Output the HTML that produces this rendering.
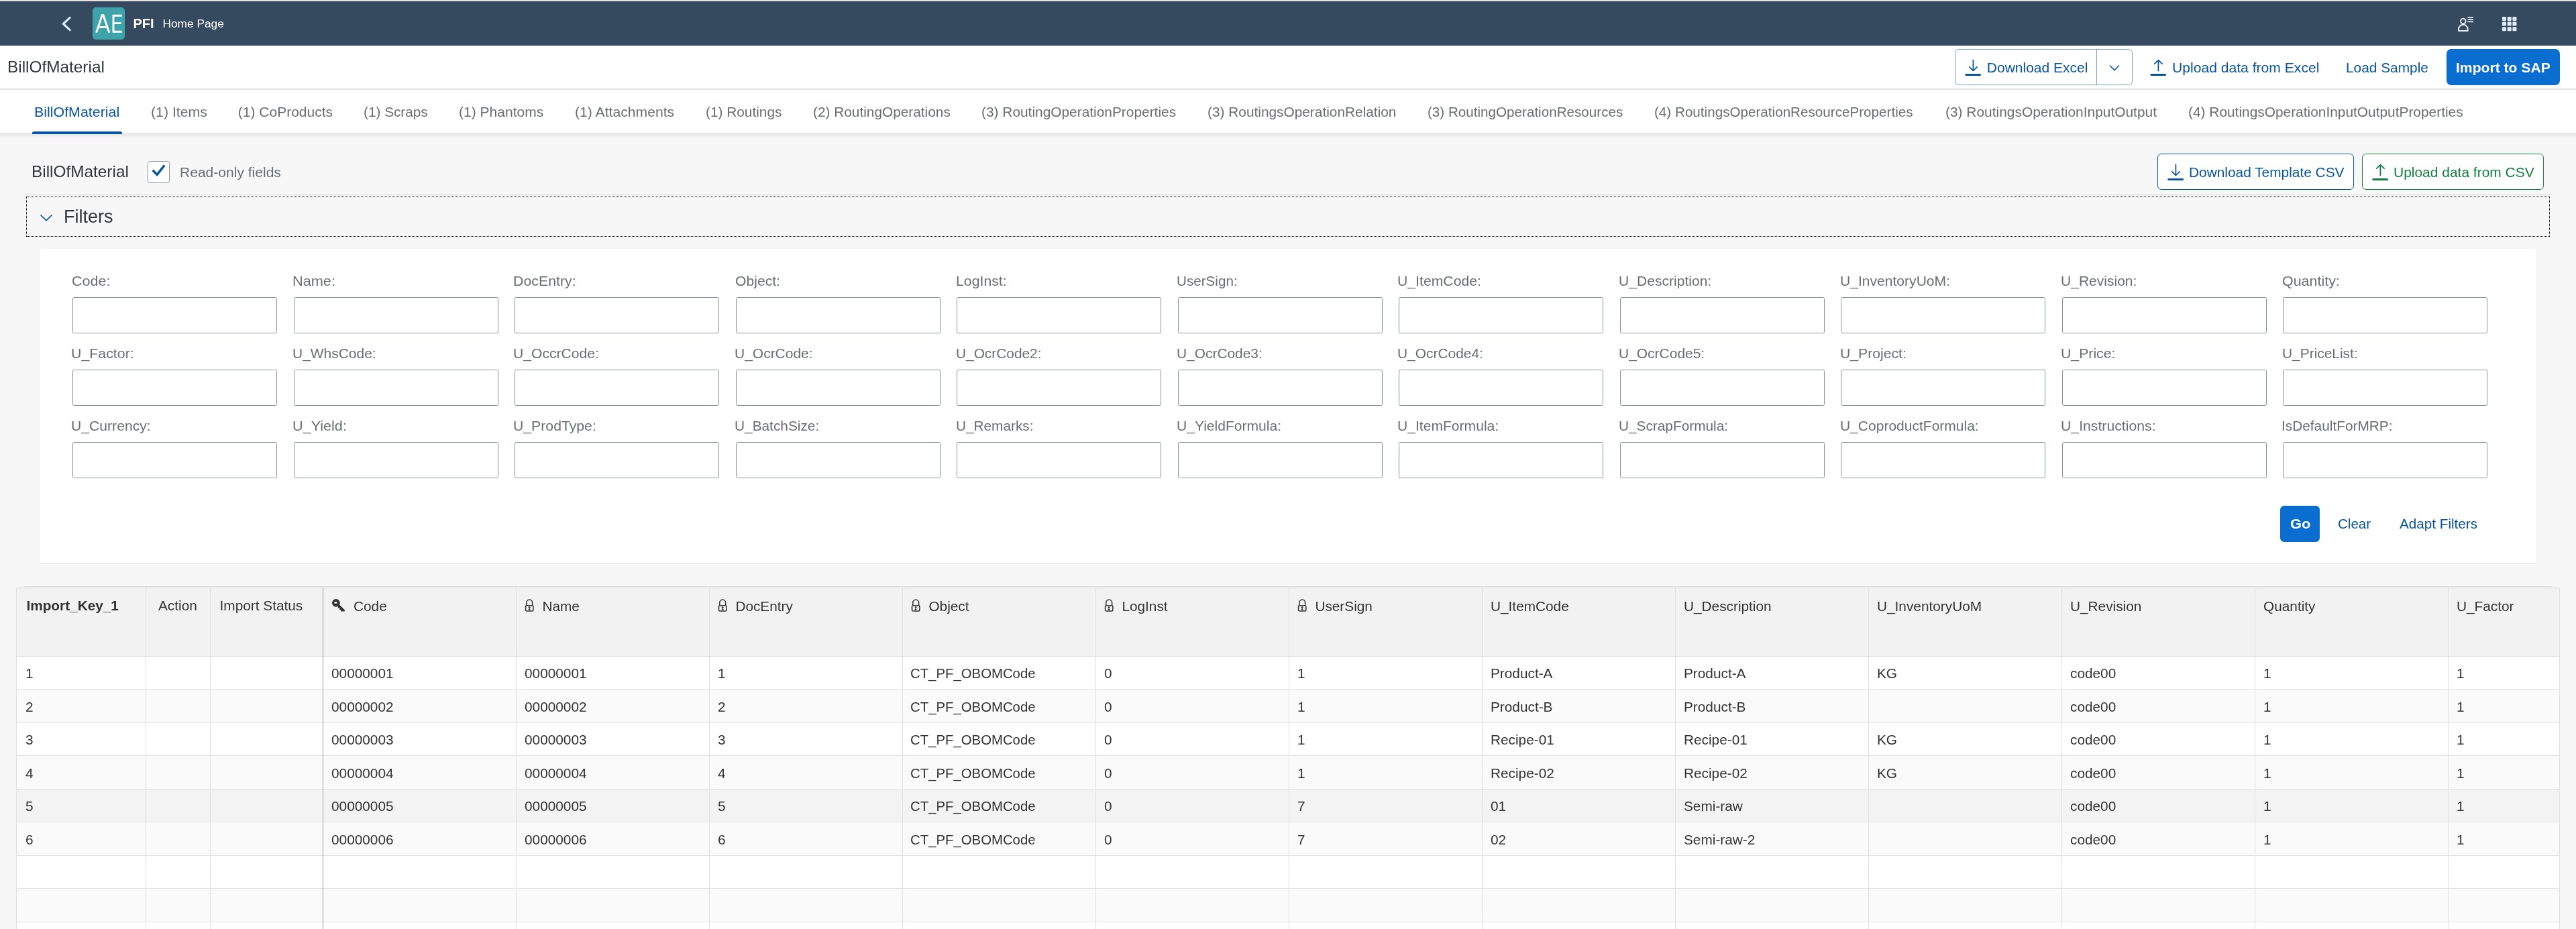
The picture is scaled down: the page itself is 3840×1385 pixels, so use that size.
<!DOCTYPE html>
<html><head><meta charset="utf-8"><title>BillOfMaterial</title>
<style>
html,body{margin:0;padding:0;}
body{width:3840px;height:1385px;overflow:hidden;position:relative;background:#f7f7f7;font-family:"Liberation Sans", sans-serif;}
.t{position:absolute;white-space:nowrap;}
.r{position:absolute;}
</style></head><body>
<div id="wrap" style="position:absolute;left:0;top:0;width:3840px;height:1385px;will-change:transform"><div class="r" style="left:0px;top:0px;width:3840px;height:2px;background:#e3e3e4"></div><div class="r" style="left:0px;top:2px;width:3840px;height:66px;background:#354a5f"></div><div class="r" style="left:0px;top:2px;width:3840px;height:1px;background:#2a3d54"></div><svg class="r" style="left:88px;top:22px" width="24" height="28" viewBox="0 0 24 28"><path d="M16.2 4.3 L6.3 13.5 L16.2 22.6" fill="none" stroke="#d6eaff" stroke-width="3.1" stroke-linecap="round" stroke-linejoin="round"/></svg><div class="r" style="left:138px;top:11px;width:48px;height:48px;background:#3fa3aa;border-radius:5px"></div><svg class="r" style="left:138px;top:11px" width="48" height="48" viewBox="0 0 48 48"><path d="M5.6 37.6 L14.2 11.8 L16 11.8 L24.8 37.6 M8.6 29.4 L21.8 29.4" fill="none" stroke="#fff" stroke-width="2.9" stroke-linejoin="miter"/><path d="M43.6 12.2 L31 12.2 L31 36.2 L43.6 36.2 M31 23.6 L42.8 23.6" fill="none" stroke="#fff" stroke-width="2.9"/></svg><div class="t" style="left:198.50px;top:24.77px;font-size:20px;line-height:20px;color:#ffffff;font-weight:bold;">PFI</div><div class="t" style="left:242.50px;top:26.56px;font-size:17.3px;line-height:17.3px;color:#ffffff;font-weight:normal;">Home Page</div><svg class="r" style="left:3662px;top:22px" width="28" height="28" viewBox="0 0 28 28"><circle cx="9.8" cy="9.6" r="3.8" fill="none" stroke="#e0eeff" stroke-width="2"/><path d="M3 24 L3 21.5 A6.8 6.8 0 0 1 16.6 21.5 L16.6 24 Z" fill="none" stroke="#e0eeff" stroke-width="2" stroke-linejoin="round"/><rect x="16.5" y="3" width="8.5" height="1.8" fill="#e0eeff"/><rect x="16.5" y="6.2" width="8.5" height="1.8" fill="#e0eeff"/><rect x="16.5" y="9.4" width="8.5" height="1.8" fill="#e0eeff"/></svg><svg class="r" style="left:3730px;top:25px" width="23" height="22" viewBox="0 0 23 22"><rect x="0.00" y="0.00" width="6" height="6" rx="1" fill="#e0eeff"/><rect x="7.70" y="0.00" width="6" height="6" rx="1" fill="#e0eeff"/><rect x="15.40" y="0.00" width="6" height="6" rx="1" fill="#e0eeff"/><rect x="0.00" y="7.60" width="6" height="6" rx="1" fill="#e0eeff"/><rect x="7.70" y="7.60" width="6" height="6" rx="1" fill="#e0eeff"/><rect x="15.40" y="7.60" width="6" height="6" rx="1" fill="#e0eeff"/><rect x="0.00" y="15.20" width="6" height="6" rx="1" fill="#e0eeff"/><rect x="7.70" y="15.20" width="6" height="6" rx="1" fill="#e0eeff"/><rect x="15.40" y="15.20" width="6" height="6" rx="1" fill="#e0eeff"/></svg><div class="r" style="left:0px;top:68px;width:3840px;height:65px;background:#ffffff"></div><div class="r" style="left:0px;top:132px;width:3840px;height:2px;background:#e0e0e0"></div><div class="t cal cal0" style="left:11.47px;top:88.48px;font-size:24px;line-height:24px;color:#32363a;font-weight:normal;transform:scaleX(1.0150);transform-origin:0 0;">BillOfMaterial</div><div class="r" style="left:2914px;top:73px;width:265px;height:54px;box-sizing:border-box;border:1px solid #72a0d6;border-radius:6px;background:#fff"></div><div class="r" style="left:3125px;top:73px;width:1px;height:54px;background:#72a0d6"></div><svg class="r" style="left:2929px;top:88px" width="26" height="27" viewBox="0 0 26 27"><path d="M12.4 1.6 V17.3 M6.7 11.9 L12.4 17.5 L18.1 11.9" fill="none" stroke="#0854a0" stroke-width="1.75" stroke-linecap="round" stroke-linejoin="round"/><rect x="0.3" y="22.1" width="23.8" height="2.9" rx="1.45" fill="#0854a0"/></svg><div class="t cal cal1" style="left:2961.80px;top:90.42px;font-size:21px;line-height:21px;color:#0854a0;font-weight:normal;transform:scaleX(1.0000);transform-origin:0 0;">Download Excel</div><svg class="r" style="left:3144px;top:96px" width="16" height="11" viewBox="0 0 16 11"><path d="M1.5 2 L8 8.5 L14.5 2" fill="none" stroke="#0854a0" stroke-width="1.6" stroke-linecap="round"/></svg><svg class="r" style="left:3205px;top:88px" width="26" height="27" viewBox="0 0 26 27"><path d="M12.4 17.6 V2.2 M6.7 7.1 L12.4 1.6 L18.1 7.1" fill="none" stroke="#0854a0" stroke-width="1.75" stroke-linecap="round" stroke-linejoin="round"/><rect x="0.3" y="22.1" width="23.8" height="2.9" rx="1.45" fill="#0854a0"/></svg><div class="t cal cal2" style="left:3238.19px;top:90.42px;font-size:21px;line-height:21px;color:#0854a0;font-weight:normal;transform:scaleX(1.0051);transform-origin:0 0;">Upload data from Excel</div><div class="t cal cal3" style="left:3497.40px;top:90.42px;font-size:21px;line-height:21px;color:#0854a0;font-weight:normal;transform:scaleX(0.9934);transform-origin:0 0;">Load Sample</div><div class="r" style="left:3647px;top:73px;width:169px;height:54px;background:#0a6ed1;border-radius:7px"></div><div class="t cal cal4" style="left:3660.79px;top:90.42px;font-size:21px;line-height:21px;color:#ffffff;font-weight:bold;transform:scaleX(1.0051);transform-origin:0 0;">Import to SAP</div><div class="r" style="left:0px;top:134px;width:3840px;height:65px;background:#ffffff"></div><div class="r" style="left:0px;top:199px;width:3840px;height:1px;background:#d6d6d6"></div><div class="r" style="left:0px;top:200px;width:3840px;height:7px;background:linear-gradient(#e8e8e8,#f7f7f7)"></div><div class="t cal cal5" style="left:51.17px;top:156.12px;font-size:21px;line-height:21px;color:#0854a0;font-weight:normal;transform:scaleX(1.0189);transform-origin:0 0;">BillOfMaterial</div><div class="t cal cal6" style="left:224.78px;top:156.12px;font-size:21px;line-height:21px;color:#6a6d70;font-weight:normal;transform:scaleX(1.0123);transform-origin:0 0;">(1) Items</div><div class="t cal cal7" style="left:354.80px;top:156.12px;font-size:21px;line-height:21px;color:#6a6d70;font-weight:normal;transform:scaleX(1.0000);transform-origin:0 0;">(1) CoProducts</div><div class="t cal cal8" style="left:542.01px;top:156.12px;font-size:21px;line-height:21px;color:#6a6d70;font-weight:normal;transform:scaleX(0.9884);transform-origin:0 0;">(1) Scraps</div><div class="t cal cal9" style="left:684.20px;top:156.12px;font-size:21px;line-height:21px;color:#6a6d70;font-weight:normal;transform:scaleX(1.0024);transform-origin:0 0;">(1) Phantoms</div><div class="t cal cal10" style="left:856.98px;top:156.12px;font-size:21px;line-height:21px;color:#6a6d70;font-weight:normal;transform:scaleX(1.0076);transform-origin:0 0;">(1) Attachments</div><div class="t cal cal11" style="left:1051.81px;top:156.12px;font-size:21px;line-height:21px;color:#6a6d70;font-weight:normal;transform:scaleX(0.9912);transform-origin:0 0;">(1) Routings</div><div class="t cal cal12" style="left:1212.40px;top:156.12px;font-size:21px;line-height:21px;color:#6a6d70;font-weight:normal;transform:scaleX(0.9912);transform-origin:0 0;">(2) RoutingOperations</div><div class="t cal cal13" style="left:1463.21px;top:156.12px;font-size:21px;line-height:21px;color:#6a6d70;font-weight:normal;transform:scaleX(0.9941);transform-origin:0 0;">(3) RoutingOperationProperties</div><div class="t cal cal14" style="left:1800.00px;top:156.12px;font-size:21px;line-height:21px;color:#6a6d70;font-weight:normal;transform:scaleX(0.9922);transform-origin:0 0;">(3) RoutingsOperationRelation</div><div class="t cal cal15" style="left:2127.82px;top:156.12px;font-size:21px;line-height:21px;color:#6a6d70;font-weight:normal;transform:scaleX(0.9824);transform-origin:0 0;">(3) RoutingOperationResources</div><div class="t cal cal16" style="left:2466.02px;top:156.12px;font-size:21px;line-height:21px;color:#6a6d70;font-weight:normal;transform:scaleX(0.9831);transform-origin:0 0;">(4) RoutingsOperationResourceProperties</div><div class="t cal cal17" style="left:2899.59px;top:156.12px;font-size:21px;line-height:21px;color:#6a6d70;font-weight:normal;transform:scaleX(0.9956);transform-origin:0 0;">(3) RoutingsOperationInputOutput</div><div class="t cal cal18" style="left:3261.80px;top:156.12px;font-size:21px;line-height:21px;color:#6a6d70;font-weight:normal;transform:scaleX(0.9941);transform-origin:0 0;">(4) RoutingsOperationInputOutputProperties</div><div class="r" style="left:48px;top:196px;width:134px;height:4px;background:#0854a0;border-radius:2.5px 2.5px 0 0"></div><div class="t cal cal19" style="left:47.37px;top:243.68px;font-size:24px;line-height:24px;color:#32363a;font-weight:normal;transform:scaleX(1.0150);transform-origin:0 0;">BillOfMaterial</div><div class="r" style="left:220px;top:240px;width:33px;height:33px;box-sizing:border-box;border:1.5px solid #89919a;border-radius:3.5px;background:#fff"></div><svg class="r" style="left:224px;top:243px" width="25" height="24" viewBox="0 0 25 24"><path d="M3.6 10.8 L10.2 17.4 L21.2 3.4" fill="none" stroke="#0854a0" stroke-width="3.4" stroke-linecap="butt" stroke-linejoin="miter"/></svg><div class="t cal cal20" style="left:268.39px;top:245.82px;font-size:21px;line-height:21px;color:#6a6d70;font-weight:normal;transform:scaleX(1.0020);transform-origin:0 0;">Read-only fields</div><div class="r" style="left:3216px;top:229px;width:293px;height:54px;box-sizing:border-box;border:1px solid #0b57a4;border-radius:6px;background:#fff"></div><svg class="r" style="left:3231px;top:244px" width="26" height="27" viewBox="0 0 26 27"><path d="M12.4 1.6 V17.3 M6.7 11.9 L12.4 17.5 L18.1 11.9" fill="none" stroke="#0854a0" stroke-width="1.75" stroke-linecap="round" stroke-linejoin="round"/><rect x="0.3" y="22.1" width="23.8" height="2.9" rx="1.45" fill="#0854a0"/></svg><div class="t cal cal21" style="left:3262.81px;top:246.22px;font-size:21px;line-height:21px;color:#0854a0;font-weight:normal;transform:scaleX(0.9931);transform-origin:0 0;">Download Template CSV</div><div class="r" style="left:3521px;top:229px;width:271px;height:54px;box-sizing:border-box;border:1px solid #1a8147;border-radius:6px;background:#fff"></div><svg class="r" style="left:3535.6px;top:244px" width="26" height="27" viewBox="0 0 26 27"><path d="M12.4 17.6 V2.2 M6.7 7.1 L12.4 1.6 L18.1 7.1" fill="none" stroke="#107e3e" stroke-width="1.75" stroke-linecap="round" stroke-linejoin="round"/><rect x="0.3" y="22.1" width="23.8" height="2.9" rx="1.45" fill="#107e3e"/></svg><div class="t cal cal22" style="left:3567.59px;top:246.22px;font-size:21px;line-height:21px;color:#107e3e;font-weight:normal;transform:scaleX(0.9981);transform-origin:0 0;">Upload data from CSV</div><div class="r" style="left:36px;top:289px;width:3768px;height:1px;background:#dcdcdc"></div><div class="r" style="left:39px;top:293px;width:3762px;height:60px;box-sizing:border-box;border:1.5px dotted #000"></div><svg class="r" style="left:58px;top:318px" width="22" height="14" viewBox="0 0 22 14"><path d="M3 2.9 L11 10.9 L19 2.9" fill="none" stroke="#0b59a6" stroke-width="1.65" stroke-linecap="round"/></svg><div class="t cal cal23" style="left:94.58px;top:309.54px;font-size:27px;line-height:27px;color:#32363a;font-weight:normal;transform:scaleX(1.0014);transform-origin:0 0;">Filters</div><div class="r" style="left:60px;top:371px;width:3720px;height:470px;background:#ffffff;border-bottom:1.5px solid #e0e0e0;box-sizing:border-box"></div><div class="t cal cal24" style="left:107.17px;top:408.22px;font-size:21px;line-height:21px;color:#6a6d70;font-weight:normal;transform:scaleX(1.0264);transform-origin:0 0;">Code:</div><div class="r" style="left:108.0px;top:443px;width:305px;height:54px;box-sizing:border-box;border:1px solid #89919a;border-radius:2.5px;background:#fff"></div><div class="t cal cal25" style="left:435.94px;top:408.22px;font-size:21px;line-height:21px;color:#6a6d70;font-weight:normal;transform:scaleX(1.0345);transform-origin:0 0;">Name:</div><div class="r" style="left:437.5px;top:443px;width:305px;height:54px;box-sizing:border-box;border:1px solid #89919a;border-radius:2.5px;background:#fff"></div><div class="t cal cal26" style="left:764.96px;top:408.22px;font-size:21px;line-height:21px;color:#6a6d70;font-weight:normal;transform:scaleX(1.0159);transform-origin:0 0;">DocEntry:</div><div class="r" style="left:767.0px;top:443px;width:305px;height:54px;box-sizing:border-box;border:1px solid #89919a;border-radius:2.5px;background:#fff"></div><div class="t cal cal27" style="left:1096.39px;top:408.22px;font-size:21px;line-height:21px;color:#6a6d70;font-weight:normal;transform:scaleX(1.0063);transform-origin:0 0;">Object:</div><div class="r" style="left:1096.5px;top:443px;width:305px;height:54px;box-sizing:border-box;border:1px solid #89919a;border-radius:2.5px;background:#fff"></div><div class="t cal cal28" style="left:1424.97px;top:408.22px;font-size:21px;line-height:21px;color:#6a6d70;font-weight:normal;transform:scaleX(1.0127);transform-origin:0 0;">LogInst:</div><div class="r" style="left:1426.0px;top:443px;width:305px;height:54px;box-sizing:border-box;border:1px solid #89919a;border-radius:2.5px;background:#fff"></div><div class="t cal cal29" style="left:1754.23px;top:408.22px;font-size:21px;line-height:21px;color:#6a6d70;font-weight:normal;transform:scaleX(0.9831);transform-origin:0 0;">UserSign:</div><div class="r" style="left:1755.5px;top:443px;width:305px;height:54px;box-sizing:border-box;border:1px solid #89919a;border-radius:2.5px;background:#fff"></div><div class="t cal cal30" style="left:2083.37px;top:408.22px;font-size:21px;line-height:21px;color:#6a6d70;font-weight:normal;transform:scaleX(1.0100);transform-origin:0 0;">U_ItemCode:</div><div class="r" style="left:2085.0px;top:443px;width:305px;height:54px;box-sizing:border-box;border:1px solid #89919a;border-radius:2.5px;background:#fff"></div><div class="t cal cal31" style="left:2413.39px;top:408.22px;font-size:21px;line-height:21px;color:#6a6d70;font-weight:normal;transform:scaleX(1.0037);transform-origin:0 0;">U_Description:</div><div class="r" style="left:2414.5px;top:443px;width:305px;height:54px;box-sizing:border-box;border:1px solid #89919a;border-radius:2.5px;background:#fff"></div><div class="t cal cal32" style="left:2742.98px;top:408.22px;font-size:21px;line-height:21px;color:#6a6d70;font-weight:normal;transform:scaleX(1.0037);transform-origin:0 0;">U_InventoryUoM:</div><div class="r" style="left:2744.0px;top:443px;width:305px;height:54px;box-sizing:border-box;border:1px solid #89919a;border-radius:2.5px;background:#fff"></div><div class="t cal cal33" style="left:3071.58px;top:408.22px;font-size:21px;line-height:21px;color:#6a6d70;font-weight:normal;transform:scaleX(1.0018);transform-origin:0 0;">U_Revision:</div><div class="r" style="left:3073.5px;top:443px;width:305px;height:54px;box-sizing:border-box;border:1px solid #89919a;border-radius:2.5px;background:#fff"></div><div class="t cal cal34" style="left:3401.56px;top:408.22px;font-size:21px;line-height:21px;color:#6a6d70;font-weight:normal;transform:scaleX(1.0210);transform-origin:0 0;">Quantity:</div><div class="r" style="left:3403.0px;top:443px;width:305px;height:54px;box-sizing:border-box;border:1px solid #89919a;border-radius:2.5px;background:#fff"></div><div class="t cal cal35" style="left:106.17px;top:516.22px;font-size:21px;line-height:21px;color:#6a6d70;font-weight:normal;transform:scaleX(1.0159);transform-origin:0 0;">U_Factor:</div><div class="r" style="left:108.0px;top:551px;width:305px;height:54px;box-sizing:border-box;border:1px solid #89919a;border-radius:2.5px;background:#fff"></div><div class="t cal cal36" style="left:435.99px;top:516.22px;font-size:21px;line-height:21px;color:#6a6d70;font-weight:normal;transform:scaleX(0.9983);transform-origin:0 0;">U_WhsCode:</div><div class="r" style="left:437.5px;top:551px;width:305px;height:54px;box-sizing:border-box;border:1px solid #89919a;border-radius:2.5px;background:#fff"></div><div class="t cal cal37" style="left:764.98px;top:516.22px;font-size:21px;line-height:21px;color:#6a6d70;font-weight:normal;transform:scaleX(1.0057);transform-origin:0 0;">U_OccrCode:</div><div class="r" style="left:767.0px;top:551px;width:305px;height:54px;box-sizing:border-box;border:1px solid #89919a;border-radius:2.5px;background:#fff"></div><div class="t cal cal38" style="left:1095.39px;top:516.22px;font-size:21px;line-height:21px;color:#6a6d70;font-weight:normal;transform:scaleX(0.9991);transform-origin:0 0;">U_OcrCode:</div><div class="r" style="left:1096.5px;top:551px;width:305px;height:54px;box-sizing:border-box;border:1px solid #89919a;border-radius:2.5px;background:#fff"></div><div class="t cal cal39" style="left:1425.00px;top:516.22px;font-size:21px;line-height:21px;color:#6a6d70;font-weight:normal;transform:scaleX(0.9928);transform-origin:0 0;">U_OcrCode2:</div><div class="r" style="left:1426.0px;top:551px;width:305px;height:54px;box-sizing:border-box;border:1px solid #89919a;border-radius:2.5px;background:#fff"></div><div class="t cal cal40" style="left:1754.21px;top:516.22px;font-size:21px;line-height:21px;color:#6a6d70;font-weight:normal;transform:scaleX(0.9952);transform-origin:0 0;">U_OcrCode3:</div><div class="r" style="left:1755.5px;top:551px;width:305px;height:54px;box-sizing:border-box;border:1px solid #89919a;border-radius:2.5px;background:#fff"></div><div class="t cal cal41" style="left:2083.40px;top:516.22px;font-size:21px;line-height:21px;color:#6a6d70;font-weight:normal;transform:scaleX(0.9960);transform-origin:0 0;">U_OcrCode4:</div><div class="r" style="left:2085.0px;top:551px;width:305px;height:54px;box-sizing:border-box;border:1px solid #89919a;border-radius:2.5px;background:#fff"></div><div class="t cal cal42" style="left:2413.40px;top:516.22px;font-size:21px;line-height:21px;color:#6a6d70;font-weight:normal;transform:scaleX(0.9984);transform-origin:0 0;">U_OcrCode5:</div><div class="r" style="left:2414.5px;top:551px;width:305px;height:54px;box-sizing:border-box;border:1px solid #89919a;border-radius:2.5px;background:#fff"></div><div class="t cal cal43" style="left:2742.98px;top:516.22px;font-size:21px;line-height:21px;color:#6a6d70;font-weight:normal;transform:scaleX(1.0074);transform-origin:0 0;">U_Project:</div><div class="r" style="left:2744.0px;top:551px;width:305px;height:54px;box-sizing:border-box;border:1px solid #89919a;border-radius:2.5px;background:#fff"></div><div class="t cal cal44" style="left:3071.57px;top:516.22px;font-size:21px;line-height:21px;color:#6a6d70;font-weight:normal;transform:scaleX(1.0117);transform-origin:0 0;">U_Price:</div><div class="r" style="left:3073.5px;top:551px;width:305px;height:54px;box-sizing:border-box;border:1px solid #89919a;border-radius:2.5px;background:#fff"></div><div class="t cal cal45" style="left:3401.59px;top:516.22px;font-size:21px;line-height:21px;color:#6a6d70;font-weight:normal;transform:scaleX(0.9955);transform-origin:0 0;">U_PriceList:</div><div class="r" style="left:3403.0px;top:551px;width:305px;height:54px;box-sizing:border-box;border:1px solid #89919a;border-radius:2.5px;background:#fff"></div><div class="t cal cal46" style="left:106.19px;top:624.22px;font-size:21px;line-height:21px;color:#6a6d70;font-weight:normal;transform:scaleX(1.0070);transform-origin:0 0;">U_Currency:</div><div class="r" style="left:108.0px;top:659px;width:305px;height:54px;box-sizing:border-box;border:1px solid #89919a;border-radius:2.5px;background:#fff"></div><div class="t cal cal47" style="left:435.94px;top:624.22px;font-size:21px;line-height:21px;color:#6a6d70;font-weight:normal;transform:scaleX(1.0293);transform-origin:0 0;">U_Yield:</div><div class="r" style="left:437.5px;top:659px;width:305px;height:54px;box-sizing:border-box;border:1px solid #89919a;border-radius:2.5px;background:#fff"></div><div class="t cal cal48" style="left:764.97px;top:624.22px;font-size:21px;line-height:21px;color:#6a6d70;font-weight:normal;transform:scaleX(1.0102);transform-origin:0 0;">U_ProdType:</div><div class="r" style="left:767.0px;top:659px;width:305px;height:54px;box-sizing:border-box;border:1px solid #89919a;border-radius:2.5px;background:#fff"></div><div class="t cal cal49" style="left:1095.41px;top:624.22px;font-size:21px;line-height:21px;color:#6a6d70;font-weight:normal;transform:scaleX(0.9919);transform-origin:0 0;">U_BatchSize:</div><div class="r" style="left:1096.5px;top:659px;width:305px;height:54px;box-sizing:border-box;border:1px solid #89919a;border-radius:2.5px;background:#fff"></div><div class="t cal cal50" style="left:1425.01px;top:624.22px;font-size:21px;line-height:21px;color:#6a6d70;font-weight:normal;transform:scaleX(0.9894);transform-origin:0 0;">U_Remarks:</div><div class="r" style="left:1426.0px;top:659px;width:305px;height:54px;box-sizing:border-box;border:1px solid #89919a;border-radius:2.5px;background:#fff"></div><div class="t cal cal51" style="left:1754.20px;top:624.22px;font-size:21px;line-height:21px;color:#6a6d70;font-weight:normal;transform:scaleX(1.0026);transform-origin:0 0;">U_YieldFormula:</div><div class="r" style="left:1755.5px;top:659px;width:305px;height:54px;box-sizing:border-box;border:1px solid #89919a;border-radius:2.5px;background:#fff"></div><div class="t cal cal52" style="left:2083.39px;top:624.22px;font-size:21px;line-height:21px;color:#6a6d70;font-weight:normal;transform:scaleX(1.0041);transform-origin:0 0;">U_ItemFormula:</div><div class="r" style="left:2085.0px;top:659px;width:305px;height:54px;box-sizing:border-box;border:1px solid #89919a;border-radius:2.5px;background:#fff"></div><div class="t cal cal53" style="left:2413.41px;top:624.22px;font-size:21px;line-height:21px;color:#6a6d70;font-weight:normal;transform:scaleX(0.9907);transform-origin:0 0;">U_ScrapFormula:</div><div class="r" style="left:2414.5px;top:659px;width:305px;height:54px;box-sizing:border-box;border:1px solid #89919a;border-radius:2.5px;background:#fff"></div><div class="t cal cal54" style="left:2742.99px;top:624.22px;font-size:21px;line-height:21px;color:#6a6d70;font-weight:normal;transform:scaleX(1.0005);transform-origin:0 0;">U_CoproductFormula:</div><div class="r" style="left:2744.0px;top:659px;width:305px;height:54px;box-sizing:border-box;border:1px solid #89919a;border-radius:2.5px;background:#fff"></div><div class="t cal cal55" style="left:3071.57px;top:624.22px;font-size:21px;line-height:21px;color:#6a6d70;font-weight:normal;transform:scaleX(1.0110);transform-origin:0 0;">U_Instructions:</div><div class="r" style="left:3073.5px;top:659px;width:305px;height:54px;box-sizing:border-box;border:1px solid #89919a;border-radius:2.5px;background:#fff"></div><div class="t cal cal56" style="left:3400.61px;top:624.22px;font-size:21px;line-height:21px;color:#6a6d70;font-weight:normal;transform:scaleX(0.9920);transform-origin:0 0;">IsDefaultForMRP:</div><div class="r" style="left:3403.0px;top:659px;width:305px;height:54px;box-sizing:border-box;border:1px solid #89919a;border-radius:2.5px;background:#fff"></div><div class="r" style="left:3399px;top:754px;width:59px;height:54px;background:#0a6ed1;border-radius:6px"></div><div class="t cal cal57" style="left:3413.53px;top:770.22px;font-size:21px;line-height:21px;color:#ffffff;font-weight:bold;transform:scaleX(1.0407);transform-origin:0 0;">Go</div><div class="t cal cal58" style="left:3484.82px;top:770.22px;font-size:21px;line-height:21px;color:#0854a0;font-weight:normal;transform:scaleX(0.9796);transform-origin:0 0;">Clear</div><div class="t cal cal59" style="left:3577.39px;top:770.22px;font-size:21px;line-height:21px;color:#0854a0;font-weight:normal;transform:scaleX(0.9846);transform-origin:0 0;">Adapt Filters</div><div class="r" style="left:36px;top:874px;width:3768px;height:1px;background:#dcdcdc"></div><div class="r" style="left:25px;top:876px;width:3791px;height:509px;background:#ffffff"></div><div class="r" style="left:25px;top:876px;width:3791px;height:102px;background:#f2f2f2"></div><div class="r" style="left:25px;top:875.5px;width:3791px;height:1.5px;background:#d5d5d5"></div><div class="r" style="left:25px;top:978.30px;width:3791px;height:49.5px;background:#ffffff"></div><div class="r" style="left:25px;top:977.80px;width:3791px;height:1px;background:#e1e1e1"></div><div class="r" style="left:25px;top:1027.80px;width:3791px;height:49.5px;background:#fafafa"></div><div class="r" style="left:25px;top:1027.30px;width:3791px;height:1px;background:#e1e1e1"></div><div class="r" style="left:25px;top:1077.30px;width:3791px;height:49.5px;background:#ffffff"></div><div class="r" style="left:25px;top:1076.80px;width:3791px;height:1px;background:#e1e1e1"></div><div class="r" style="left:25px;top:1126.80px;width:3791px;height:49.5px;background:#fafafa"></div><div class="r" style="left:25px;top:1126.30px;width:3791px;height:1px;background:#e1e1e1"></div><div class="r" style="left:25px;top:1176.30px;width:3791px;height:49.5px;background:#f3f3f3"></div><div class="r" style="left:25px;top:1175.80px;width:3791px;height:1px;background:#e1e1e1"></div><div class="r" style="left:25px;top:1225.80px;width:3791px;height:49.5px;background:#fafafa"></div><div class="r" style="left:25px;top:1225.30px;width:3791px;height:1px;background:#e1e1e1"></div><div class="r" style="left:25px;top:1275.30px;width:3791px;height:49.5px;background:#ffffff"></div><div class="r" style="left:25px;top:1274.80px;width:3791px;height:1px;background:#e1e1e1"></div><div class="r" style="left:25px;top:1324.80px;width:3791px;height:49.5px;background:#fafafa"></div><div class="r" style="left:25px;top:1324.30px;width:3791px;height:1px;background:#e1e1e1"></div><div class="r" style="left:25px;top:1374.30px;width:3791px;height:49.5px;background:#ffffff"></div><div class="r" style="left:25px;top:1373.80px;width:3791px;height:1px;background:#e1e1e1"></div><div class="r" style="left:25px;top:977.80px;width:3791px;height:1.5px;background:#dcdcdc"></div><div class="r" style="left:24.20px;top:876px;width:1.2px;height:509px;background:#e1e1e1"></div><div class="r" style="left:216.90px;top:876px;width:1.2px;height:509px;background:#e1e1e1"></div><div class="r" style="left:312.90px;top:876px;width:1.2px;height:509px;background:#e1e1e1"></div><div class="r" style="left:480.90px;top:876px;width:1.2px;height:509px;background:#9a9a9a"></div><div class="r" style="left:768.90px;top:876px;width:1.2px;height:509px;background:#e1e1e1"></div><div class="r" style="left:1056.90px;top:876px;width:1.2px;height:509px;background:#e1e1e1"></div><div class="r" style="left:1344.90px;top:876px;width:1.2px;height:509px;background:#e1e1e1"></div><div class="r" style="left:1632.90px;top:876px;width:1.2px;height:509px;background:#e1e1e1"></div><div class="r" style="left:1920.90px;top:876px;width:1.2px;height:509px;background:#e1e1e1"></div><div class="r" style="left:2208.90px;top:876px;width:1.2px;height:509px;background:#e1e1e1"></div><div class="r" style="left:2496.90px;top:876px;width:1.2px;height:509px;background:#e1e1e1"></div><div class="r" style="left:2784.90px;top:876px;width:1.2px;height:509px;background:#e1e1e1"></div><div class="r" style="left:3072.90px;top:876px;width:1.2px;height:509px;background:#e1e1e1"></div><div class="r" style="left:3360.90px;top:876px;width:1.2px;height:509px;background:#e1e1e1"></div><div class="r" style="left:3648.90px;top:876px;width:1.2px;height:509px;background:#e1e1e1"></div><div class="r" style="left:3815px;top:876px;width:1px;height:509px;background:#e1e1e1"></div><div class="t" style="left:39.40px;top:893.09px;font-size:20.8px;line-height:20.8px;color:#333333;font-weight:bold;">Import_Key_1</div><div class="t" style="left:236.00px;top:893.09px;font-size:20.8px;line-height:20.8px;color:#333333;font-weight:normal;">Action</div><div class="t" style="left:327.60px;top:893.09px;font-size:20.8px;line-height:20.8px;color:#333333;font-weight:normal;">Import Status</div><svg class="r" style="left:488px;top:886px" width="32" height="32" viewBox="0 0 32 32"><circle cx="12.9" cy="12.9" r="5.9" fill="#333"/><path d="M17.6 15.2 L25.7 23.3 Q26.6 25.6 24.3 25.6 L20.4 25.6 L20.4 23.5 L18.3 23.5 L18.3 20.5 L15.8 20.5 L15.8 18 L12 15 Z" fill="#333"/><ellipse cx="12.4" cy="12.6" rx="2.1" ry="1.5" fill="#f2f2f2"/></svg><div class="t" style="left:527.00px;top:893.89px;font-size:20.8px;line-height:20.8px;color:#333333;font-weight:normal;">Code</div><svg class="r" style="left:782.4px;top:893px" width="15" height="20" viewBox="0 0 15 20"><path d="M2.8 9.4 V5.3 A4.4 4.4 0 0 1 11.6 5.3 V9.4" fill="none" stroke="#333" stroke-width="1.55"/><rect x="1.55" y="9.75" width="11.3" height="8.2" rx="1.5" fill="none" stroke="#333" stroke-width="1.55"/><circle cx="7.1" cy="12.6" r="1.4" fill="#333"/><path d="M5.1 16.6 L9.1 16.6 L7.1 13.4 Z" fill="#333"/></svg><div class="t" style="left:808.40px;top:893.89px;font-size:20.8px;line-height:20.8px;color:#333333;font-weight:normal;">Name</div><svg class="r" style="left:1070.4px;top:893px" width="15" height="20" viewBox="0 0 15 20"><path d="M2.8 9.4 V5.3 A4.4 4.4 0 0 1 11.6 5.3 V9.4" fill="none" stroke="#333" stroke-width="1.55"/><rect x="1.55" y="9.75" width="11.3" height="8.2" rx="1.5" fill="none" stroke="#333" stroke-width="1.55"/><circle cx="7.1" cy="12.6" r="1.4" fill="#333"/><path d="M5.1 16.6 L9.1 16.6 L7.1 13.4 Z" fill="#333"/></svg><div class="t" style="left:1096.40px;top:893.89px;font-size:20.8px;line-height:20.8px;color:#333333;font-weight:normal;">DocEntry</div><svg class="r" style="left:1358.4px;top:893px" width="15" height="20" viewBox="0 0 15 20"><path d="M2.8 9.4 V5.3 A4.4 4.4 0 0 1 11.6 5.3 V9.4" fill="none" stroke="#333" stroke-width="1.55"/><rect x="1.55" y="9.75" width="11.3" height="8.2" rx="1.5" fill="none" stroke="#333" stroke-width="1.55"/><circle cx="7.1" cy="12.6" r="1.4" fill="#333"/><path d="M5.1 16.6 L9.1 16.6 L7.1 13.4 Z" fill="#333"/></svg><div class="t" style="left:1384.40px;top:893.89px;font-size:20.8px;line-height:20.8px;color:#333333;font-weight:normal;">Object</div><svg class="r" style="left:1646.4px;top:893px" width="15" height="20" viewBox="0 0 15 20"><path d="M2.8 9.4 V5.3 A4.4 4.4 0 0 1 11.6 5.3 V9.4" fill="none" stroke="#333" stroke-width="1.55"/><rect x="1.55" y="9.75" width="11.3" height="8.2" rx="1.5" fill="none" stroke="#333" stroke-width="1.55"/><circle cx="7.1" cy="12.6" r="1.4" fill="#333"/><path d="M5.1 16.6 L9.1 16.6 L7.1 13.4 Z" fill="#333"/></svg><div class="t" style="left:1672.40px;top:893.89px;font-size:20.8px;line-height:20.8px;color:#333333;font-weight:normal;">LogInst</div><svg class="r" style="left:1934.4px;top:893px" width="15" height="20" viewBox="0 0 15 20"><path d="M2.8 9.4 V5.3 A4.4 4.4 0 0 1 11.6 5.3 V9.4" fill="none" stroke="#333" stroke-width="1.55"/><rect x="1.55" y="9.75" width="11.3" height="8.2" rx="1.5" fill="none" stroke="#333" stroke-width="1.55"/><circle cx="7.1" cy="12.6" r="1.4" fill="#333"/><path d="M5.1 16.6 L9.1 16.6 L7.1 13.4 Z" fill="#333"/></svg><div class="t" style="left:1960.40px;top:893.89px;font-size:20.8px;line-height:20.8px;color:#333333;font-weight:normal;">UserSign</div><div class="t" style="left:2222.00px;top:893.89px;font-size:20.8px;line-height:20.8px;color:#333333;font-weight:normal;">U_ItemCode</div><div class="t" style="left:2510.00px;top:893.89px;font-size:20.8px;line-height:20.8px;color:#333333;font-weight:normal;">U_Description</div><div class="t" style="left:2798.00px;top:893.89px;font-size:20.8px;line-height:20.8px;color:#333333;font-weight:normal;">U_InventoryUoM</div><div class="t" style="left:3086.00px;top:893.89px;font-size:20.8px;line-height:20.8px;color:#333333;font-weight:normal;">U_Revision</div><div class="t" style="left:3374.00px;top:893.89px;font-size:20.8px;line-height:20.8px;color:#333333;font-weight:normal;">Quantity</div><div class="t" style="left:3662.00px;top:893.89px;font-size:20.8px;line-height:20.8px;color:#333333;font-weight:normal;">U_Factor</div><div class="t" style="left:37.90px;top:994.09px;font-size:20.8px;line-height:20.8px;color:#333333;font-weight:normal;">1</div><div class="t" style="left:494.00px;top:994.09px;font-size:20.8px;line-height:20.8px;color:#333333;font-weight:normal;">00000001</div><div class="t" style="left:782.00px;top:994.09px;font-size:20.8px;line-height:20.8px;color:#333333;font-weight:normal;">00000001</div><div class="t" style="left:1070.00px;top:994.09px;font-size:20.8px;line-height:20.8px;color:#333333;font-weight:normal;">1</div><div class="t cal cal60" style="left:1356.81px;top:994.09px;font-size:20.8px;line-height:20.8px;color:#333333;font-weight:normal;transform:scaleX(0.9783);transform-origin:0 0;">CT_PF_OBOMCode</div><div class="t" style="left:1646.00px;top:994.09px;font-size:20.8px;line-height:20.8px;color:#333333;font-weight:normal;">0</div><div class="t" style="left:1934.00px;top:994.09px;font-size:20.8px;line-height:20.8px;color:#333333;font-weight:normal;">1</div><div class="t" style="left:2222.00px;top:994.09px;font-size:20.8px;line-height:20.8px;color:#333333;font-weight:normal;">Product-A</div><div class="t" style="left:2510.00px;top:994.09px;font-size:20.8px;line-height:20.8px;color:#333333;font-weight:normal;">Product-A</div><div class="t" style="left:2798.00px;top:994.09px;font-size:20.8px;line-height:20.8px;color:#333333;font-weight:normal;">KG</div><div class="t" style="left:3086.00px;top:994.09px;font-size:20.8px;line-height:20.8px;color:#333333;font-weight:normal;">code00</div><div class="t" style="left:3374.00px;top:994.09px;font-size:20.8px;line-height:20.8px;color:#333333;font-weight:normal;">1</div><div class="t" style="left:3662.00px;top:994.09px;font-size:20.8px;line-height:20.8px;color:#333333;font-weight:normal;">1</div><div class="t" style="left:37.90px;top:1043.59px;font-size:20.8px;line-height:20.8px;color:#333333;font-weight:normal;">2</div><div class="t" style="left:494.00px;top:1043.59px;font-size:20.8px;line-height:20.8px;color:#333333;font-weight:normal;">00000002</div><div class="t" style="left:782.00px;top:1043.59px;font-size:20.8px;line-height:20.8px;color:#333333;font-weight:normal;">00000002</div><div class="t" style="left:1070.00px;top:1043.59px;font-size:20.8px;line-height:20.8px;color:#333333;font-weight:normal;">2</div><div class="t cal cal61" style="left:1356.81px;top:1043.59px;font-size:20.8px;line-height:20.8px;color:#333333;font-weight:normal;transform:scaleX(0.9783);transform-origin:0 0;">CT_PF_OBOMCode</div><div class="t" style="left:1646.00px;top:1043.59px;font-size:20.8px;line-height:20.8px;color:#333333;font-weight:normal;">0</div><div class="t" style="left:1934.00px;top:1043.59px;font-size:20.8px;line-height:20.8px;color:#333333;font-weight:normal;">1</div><div class="t" style="left:2222.00px;top:1043.59px;font-size:20.8px;line-height:20.8px;color:#333333;font-weight:normal;">Product-B</div><div class="t" style="left:2510.00px;top:1043.59px;font-size:20.8px;line-height:20.8px;color:#333333;font-weight:normal;">Product-B</div><div class="t" style="left:3086.00px;top:1043.59px;font-size:20.8px;line-height:20.8px;color:#333333;font-weight:normal;">code00</div><div class="t" style="left:3374.00px;top:1043.59px;font-size:20.8px;line-height:20.8px;color:#333333;font-weight:normal;">1</div><div class="t" style="left:3662.00px;top:1043.59px;font-size:20.8px;line-height:20.8px;color:#333333;font-weight:normal;">1</div><div class="t" style="left:37.90px;top:1093.09px;font-size:20.8px;line-height:20.8px;color:#333333;font-weight:normal;">3</div><div class="t" style="left:494.00px;top:1093.09px;font-size:20.8px;line-height:20.8px;color:#333333;font-weight:normal;">00000003</div><div class="t" style="left:782.00px;top:1093.09px;font-size:20.8px;line-height:20.8px;color:#333333;font-weight:normal;">00000003</div><div class="t" style="left:1070.00px;top:1093.09px;font-size:20.8px;line-height:20.8px;color:#333333;font-weight:normal;">3</div><div class="t cal cal62" style="left:1356.81px;top:1093.09px;font-size:20.8px;line-height:20.8px;color:#333333;font-weight:normal;transform:scaleX(0.9783);transform-origin:0 0;">CT_PF_OBOMCode</div><div class="t" style="left:1646.00px;top:1093.09px;font-size:20.8px;line-height:20.8px;color:#333333;font-weight:normal;">0</div><div class="t" style="left:1934.00px;top:1093.09px;font-size:20.8px;line-height:20.8px;color:#333333;font-weight:normal;">1</div><div class="t" style="left:2222.00px;top:1093.09px;font-size:20.8px;line-height:20.8px;color:#333333;font-weight:normal;">Recipe-01</div><div class="t" style="left:2510.00px;top:1093.09px;font-size:20.8px;line-height:20.8px;color:#333333;font-weight:normal;">Recipe-01</div><div class="t" style="left:2798.00px;top:1093.09px;font-size:20.8px;line-height:20.8px;color:#333333;font-weight:normal;">KG</div><div class="t" style="left:3086.00px;top:1093.09px;font-size:20.8px;line-height:20.8px;color:#333333;font-weight:normal;">code00</div><div class="t" style="left:3374.00px;top:1093.09px;font-size:20.8px;line-height:20.8px;color:#333333;font-weight:normal;">1</div><div class="t" style="left:3662.00px;top:1093.09px;font-size:20.8px;line-height:20.8px;color:#333333;font-weight:normal;">1</div><div class="t" style="left:37.90px;top:1142.59px;font-size:20.8px;line-height:20.8px;color:#333333;font-weight:normal;">4</div><div class="t" style="left:494.00px;top:1142.59px;font-size:20.8px;line-height:20.8px;color:#333333;font-weight:normal;">00000004</div><div class="t" style="left:782.00px;top:1142.59px;font-size:20.8px;line-height:20.8px;color:#333333;font-weight:normal;">00000004</div><div class="t" style="left:1070.00px;top:1142.59px;font-size:20.8px;line-height:20.8px;color:#333333;font-weight:normal;">4</div><div class="t cal cal63" style="left:1356.81px;top:1142.59px;font-size:20.8px;line-height:20.8px;color:#333333;font-weight:normal;transform:scaleX(0.9783);transform-origin:0 0;">CT_PF_OBOMCode</div><div class="t" style="left:1646.00px;top:1142.59px;font-size:20.8px;line-height:20.8px;color:#333333;font-weight:normal;">0</div><div class="t" style="left:1934.00px;top:1142.59px;font-size:20.8px;line-height:20.8px;color:#333333;font-weight:normal;">1</div><div class="t" style="left:2222.00px;top:1142.59px;font-size:20.8px;line-height:20.8px;color:#333333;font-weight:normal;">Recipe-02</div><div class="t" style="left:2510.00px;top:1142.59px;font-size:20.8px;line-height:20.8px;color:#333333;font-weight:normal;">Recipe-02</div><div class="t" style="left:2798.00px;top:1142.59px;font-size:20.8px;line-height:20.8px;color:#333333;font-weight:normal;">KG</div><div class="t" style="left:3086.00px;top:1142.59px;font-size:20.8px;line-height:20.8px;color:#333333;font-weight:normal;">code00</div><div class="t" style="left:3374.00px;top:1142.59px;font-size:20.8px;line-height:20.8px;color:#333333;font-weight:normal;">1</div><div class="t" style="left:3662.00px;top:1142.59px;font-size:20.8px;line-height:20.8px;color:#333333;font-weight:normal;">1</div><div class="t" style="left:37.90px;top:1192.09px;font-size:20.8px;line-height:20.8px;color:#333333;font-weight:normal;">5</div><div class="t" style="left:494.00px;top:1192.09px;font-size:20.8px;line-height:20.8px;color:#333333;font-weight:normal;">00000005</div><div class="t" style="left:782.00px;top:1192.09px;font-size:20.8px;line-height:20.8px;color:#333333;font-weight:normal;">00000005</div><div class="t" style="left:1070.00px;top:1192.09px;font-size:20.8px;line-height:20.8px;color:#333333;font-weight:normal;">5</div><div class="t cal cal64" style="left:1356.81px;top:1192.09px;font-size:20.8px;line-height:20.8px;color:#333333;font-weight:normal;transform:scaleX(0.9783);transform-origin:0 0;">CT_PF_OBOMCode</div><div class="t" style="left:1646.00px;top:1192.09px;font-size:20.8px;line-height:20.8px;color:#333333;font-weight:normal;">0</div><div class="t" style="left:1934.00px;top:1192.09px;font-size:20.8px;line-height:20.8px;color:#333333;font-weight:normal;">7</div><div class="t" style="left:2222.00px;top:1192.09px;font-size:20.8px;line-height:20.8px;color:#333333;font-weight:normal;">01</div><div class="t" style="left:2510.00px;top:1192.09px;font-size:20.8px;line-height:20.8px;color:#333333;font-weight:normal;">Semi-raw</div><div class="t" style="left:3086.00px;top:1192.09px;font-size:20.8px;line-height:20.8px;color:#333333;font-weight:normal;">code00</div><div class="t" style="left:3374.00px;top:1192.09px;font-size:20.8px;line-height:20.8px;color:#333333;font-weight:normal;">1</div><div class="t" style="left:3662.00px;top:1192.09px;font-size:20.8px;line-height:20.8px;color:#333333;font-weight:normal;">1</div><div class="t" style="left:37.90px;top:1241.59px;font-size:20.8px;line-height:20.8px;color:#333333;font-weight:normal;">6</div><div class="t" style="left:494.00px;top:1241.59px;font-size:20.8px;line-height:20.8px;color:#333333;font-weight:normal;">00000006</div><div class="t" style="left:782.00px;top:1241.59px;font-size:20.8px;line-height:20.8px;color:#333333;font-weight:normal;">00000006</div><div class="t" style="left:1070.00px;top:1241.59px;font-size:20.8px;line-height:20.8px;color:#333333;font-weight:normal;">6</div><div class="t cal cal65" style="left:1356.81px;top:1241.59px;font-size:20.8px;line-height:20.8px;color:#333333;font-weight:normal;transform:scaleX(0.9783);transform-origin:0 0;">CT_PF_OBOMCode</div><div class="t" style="left:1646.00px;top:1241.59px;font-size:20.8px;line-height:20.8px;color:#333333;font-weight:normal;">0</div><div class="t" style="left:1934.00px;top:1241.59px;font-size:20.8px;line-height:20.8px;color:#333333;font-weight:normal;">7</div><div class="t" style="left:2222.00px;top:1241.59px;font-size:20.8px;line-height:20.8px;color:#333333;font-weight:normal;">02</div><div class="t" style="left:2510.00px;top:1241.59px;font-size:20.8px;line-height:20.8px;color:#333333;font-weight:normal;">Semi-raw-2</div><div class="t" style="left:3086.00px;top:1241.59px;font-size:20.8px;line-height:20.8px;color:#333333;font-weight:normal;">code00</div><div class="t" style="left:3374.00px;top:1241.59px;font-size:20.8px;line-height:20.8px;color:#333333;font-weight:normal;">1</div><div class="t" style="left:3662.00px;top:1241.59px;font-size:20.8px;line-height:20.8px;color:#333333;font-weight:normal;">1</div></div>
</body></html>
